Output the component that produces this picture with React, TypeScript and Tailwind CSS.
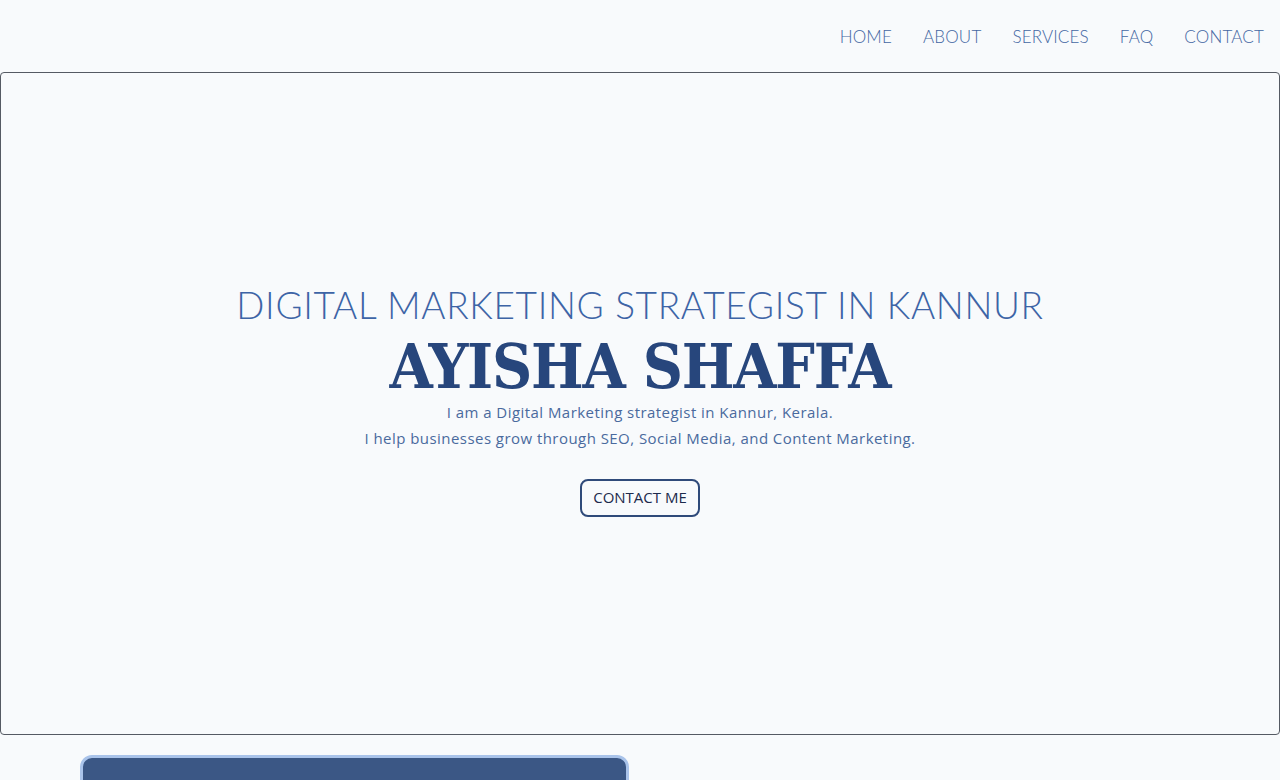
import { useState } from 'react';

const links = ['HOME', 'ABOUT', 'SERVICES', 'FAQ', 'CONTACT'];

export default function App() {
    const [active, setActive] = useState('HOME');

    return (
        <div className="min-h-screen bg-[#f8fafc] overflow-hidden">
            {/* Navbar */}
            <nav className="h-[72px] flex items-center justify-end pr-[16px]">
                <ul className="flex gap-[31px] pt-[2px]">
                    {links.map((link) => (
                        <li key={link}>
                            <button
                                onClick={() => setActive(link)}
                                className={`font-['Lato',sans-serif] font-light text-[17px] tracking-[0.01em] text-[#4467a3] hover:text-[#27467c] ${active === link ? 'text-[#3d5f9c]' : ''}`}
                            >
                                {link}
                            </button>
                        </li>
                    ))}
                </ul>
            </nav>

            {/* Hero */}
            <section className="h-[663px] border border-[#555a63] rounded-[4px] flex flex-col items-center justify-center pb-[8px]">
                <h2 className="font-['Lato',sans-serif] font-light text-[37px] leading-[44px] tracking-[0.018em] text-[#3d64a6]">
                    DIGITAL MARKETING STRATEGIST IN KANNUR
                </h2>
                <h1 className="mt-[9px] font-['DejaVu_Serif_Condensed','DejaVu_Serif',serif] font-bold text-[62px] leading-[62px] text-[#27467c] tracking-[-0.02em]">
                    AYISHA SHAFFA
                </h1>
                <div className="mt-[1px] text-center font-['Open_Sans',sans-serif] text-[15px] leading-[26px] tracking-[0.03em] text-[#4a6a9e]">
                    <p>I am a Digital Marketing strategist in Kannur, Kerala.</p>
                    <p>I help businesses grow through SEO, Social Media, and Content Marketing.</p>
                </div>
                <button className="mt-[28px] h-[38px] px-[11px] border-2 border-[#2f4a7a] rounded-[8px] font-['Open_Sans',sans-serif] text-[15px] text-[#1c2a4c] hover:bg-[#27467c] hover:text-white transition-colors">
                    CONTACT ME
                </button>
            </section>

            {/* Next section */}
            <div className="pt-[20px] pl-[80px]">
                <div className="w-[549px] h-[200px] bg-[#3b5785] border-[3px] border-[#a9c3ea] rounded-[12px]"></div>
            </div>
        </div>
    );
}
